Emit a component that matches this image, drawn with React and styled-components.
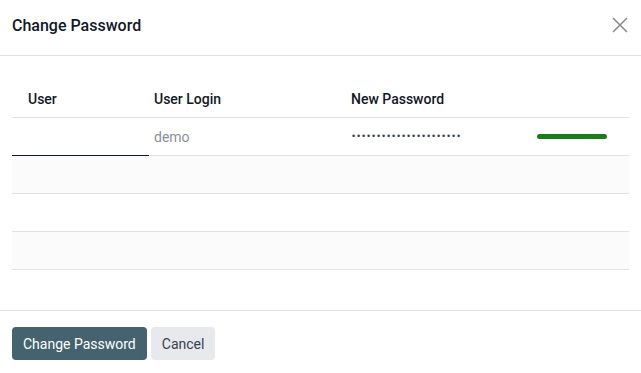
import React from "react";
import styled, { createGlobalStyle } from "styled-components";

const Global = createGlobalStyle`
  html, body { margin: 0; padding: 0; background: #fff; }
  body { font-family: Roboto, "Noto Sans", sans-serif; color: #374151; }
  * { box-sizing: border-box; }
`;

const Dialog = styled.div`
  width: 641px;
  height: 373px;
  display: flex;
  flex-direction: column;
  background: #fff;
`;

const Header = styled.header`
  height: 56px;
  display: flex;
  align-items: center;
  justify-content: space-between;
  padding: 0 12px 5px;
  border-bottom: 1px solid #dee2e6;
`;

const Title = styled.h4`
  margin: 0;
  font-size: 16px;
  font-weight: 500;
  color: #111827;
`;

const Close = styled.button`
  border: 0;
  background: none;
  padding: 0;
  width: 18px;
  height: 18px;
  display: flex;
  align-items: center;
  justify-content: center;
  cursor: pointer;
`;

const Body = styled.main`
  flex: 1;
  padding: 24px 12px 0;
`;

const Row = styled.div`
  display: grid;
  grid-template-columns: 137px 197px 1fr;
  height: 38px;
  border-bottom: 1px solid #dee2e6;
  background: ${(p) => (p.$shaded ? "#fbfbfb" : "#fff")};
`;

const HeadCell = styled.div`
  display: flex;
  align-items: center;
  font-size: 14px;
  font-weight: 500;
  color: #111827;
  padding-left: ${(p) => p.$pad || "5px"};
`;

const Cell = styled.div`
  display: flex;
  align-items: center;
  font-size: 14px;
  padding-left: ${(p) => p.$pad || "5px"};
  padding-right: ${(p) => p.$padRight || "0"};
  justify-content: ${(p) => p.$justify || "flex-start"};
  color: ${(p) => (p.$muted ? "#8a9099" : "#374151")};
`;

const UserInput = styled.div`
  align-self: stretch;
  margin-bottom: -1px;
  border-bottom: 1px solid #111827;
`;

const Dots = styled.span`
  font-family: "Liberation Sans", sans-serif;
  font-size: 9px;
  letter-spacing: 1.85px;
  color: #374151;
  line-height: 1;
  margin-left: 1px;
`;

const Meter = styled.div`
  width: 70px;
  height: 5px;
  border-radius: 3px;
  background: #1a7c1a;
`;

const Footer = styled.footer`
  border-top: 1px solid #dee2e6;
  padding: 16px 12px 13px;
  display: flex;
  gap: 4px;
`;

const Button = styled.button`
  height: 33px;
  padding: 0 11px;
  border: 0;
  border-radius: 4px;
  font-family: Roboto, sans-serif;
  font-size: 14px;
  font-weight: 400;
  background: ${(p) => (p.$primary ? "#45626f" : "#e7e9ed")};
  color: ${(p) => (p.$primary ? "#fff" : "#374151")};
  cursor: pointer;
`;

export default function App() {
  return (
    <>
      <Global />
      <Dialog>
        <Header>
          <Title>Change Password</Title>
          <Close aria-label="Close">
            <svg width="16" height="16" viewBox="0 0 16 16">
              <path d="M1 1L15 15M15 1L1 15" stroke="#8a8a8a" strokeWidth="1.5" />
            </svg>
          </Close>
        </Header>
        <Body>
          <Row>
            <HeadCell $pad="16px">User</HeadCell>
            <HeadCell>User Login</HeadCell>
            <HeadCell>New Password</HeadCell>
          </Row>
          <Row>
            <UserInput />
            <Cell $muted>demo</Cell>
            <Cell $justify="space-between" $padRight="22px">
              <Dots>{"•".repeat(22)}</Dots>
              <Meter />
            </Cell>
          </Row>
          <Row $shaded>
            <Cell />
            <Cell />
            <Cell />
          </Row>
          <Row>
            <Cell />
            <Cell />
            <Cell />
          </Row>
          <Row $shaded>
            <Cell />
            <Cell />
            <Cell />
          </Row>
        </Body>
        <Footer>
          <Button $primary>Change Password</Button>
          <Button>Cancel</Button>
        </Footer>
      </Dialog>
    </>
  );
}
